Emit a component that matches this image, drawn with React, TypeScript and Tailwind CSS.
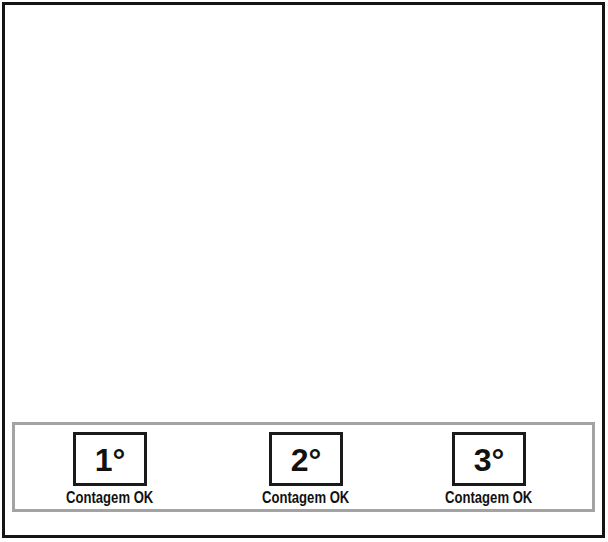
import React from 'react';

const counts = [
  { label: '1°', ml: 'ml-[45px]' },
  { label: '2°', ml: 'ml-[96px]' },
  { label: '3°', ml: 'ml-[83px]' },
];

const CountBox: React.FC<{ label: string; className?: string }> = ({ label, className }) => (
  <div className={`flex w-[100px] flex-col items-center ${className ?? ''}`}>
    <div className="flex h-[54px] w-[74px] items-center justify-center border-[3px] border-[#1a1a1a] pt-[2px]">
      <span className="font-['Liberation_Sans',Arial,sans-serif] text-[32px] font-bold leading-none text-[#111]">
        {label}
      </span>
    </div>
    {/* condensed label: no narrow face installed, so squeeze the regular bold one */}
    <span className="mt-[2px] inline-block scale-x-[0.77] whitespace-nowrap font-['Liberation_Sans',Arial,sans-serif] text-[17px] font-bold leading-[19px] text-[#111]">
      Contagem OK
    </span>
  </div>
);

export default function App() {
  return (
    <div className="m-[2px] flex h-[536px] w-[603px] flex-col justify-end border-[3px] border-[#141414] bg-white">
      <div className="mx-[7px] mb-[23px] flex h-[90px] items-start border-[3px] border-[#a3a3a3] pt-[7px]">
        {counts.map((c) => (
          <CountBox key={c.label} label={c.label} className={c.ml} />
        ))}
      </div>
    </div>
  );
}
